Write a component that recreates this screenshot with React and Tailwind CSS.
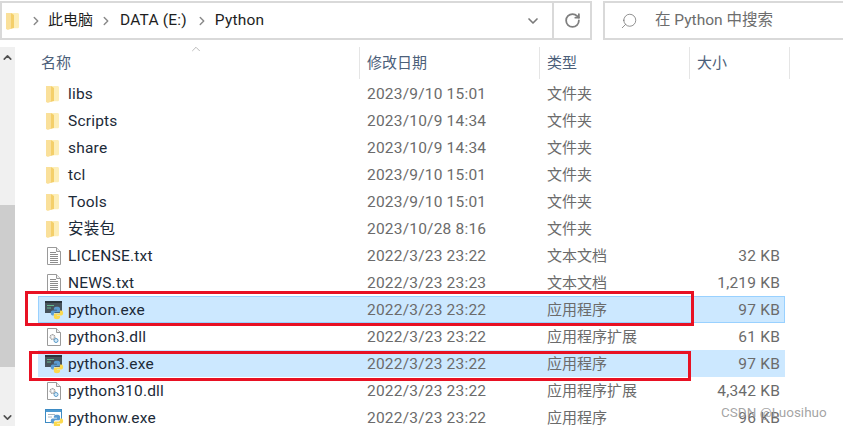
import { ChevronRight, ChevronDown, ChevronUp, RotateCw, Search } from "lucide-react";

const FONT = "font-['Roboto','Noto_Sans_CJK_SC',sans-serif]";

const ROWS = [
  { name: "libs", date: "2023/9/10 15:01", type: "文件夹", size: "", icon: "folder" },
  { name: "Scripts", date: "2023/10/9 14:34", type: "文件夹", size: "", icon: "folder" },
  { name: "share", date: "2023/10/9 14:34", type: "文件夹", size: "", icon: "folder" },
  { name: "tcl", date: "2023/9/10 15:01", type: "文件夹", size: "", icon: "folder" },
  { name: "Tools", date: "2023/9/10 15:01", type: "文件夹", size: "", icon: "folder" },
  { name: "安装包", date: "2023/10/28 8:16", type: "文件夹", size: "", icon: "folder" },
  { name: "LICENSE.txt", date: "2022/3/23 23:22", type: "文本文档", size: "32 KB", icon: "txt" },
  { name: "NEWS.txt", date: "2022/3/23 23:23", type: "文本文档", size: "1,219 KB", icon: "txt" },
  { name: "python.exe", date: "2022/3/23 23:22", type: "应用程序", size: "97 KB", icon: "py", selected: "focus" },
  { name: "python3.dll", date: "2022/3/23 23:22", type: "应用程序扩展", size: "61 KB", icon: "dll" },
  { name: "python3.exe", date: "2022/3/23 23:22", type: "应用程序", size: "97 KB", icon: "py", selected: "plain" },
  { name: "python310.dll", date: "2022/3/23 23:22", type: "应用程序扩展", size: "4,342 KB", icon: "dll" },
  { name: "pythonw.exe", date: "2022/3/23 23:22", type: "应用程序", size: "96 KB", icon: "pyw" },
];

function FolderIcon({ className = "" }) {
  return (
    <svg width="13" height="18" viewBox="0 0 13 18" className={className}>
      <path d="M0 1h5l2 1v14l-5 1.500H1l-1-1z" fill="#fbe39a" />
      <path d="M5 1h6.500c.8 0 1.500.5 1.500 1.500V15c0 .8-.7 1.300-1.500 1.300H7z" fill="#fdeeb8" />
      <path d="M5 1l3 2v13l-6 1.500 3-1.500z" fill="#f4cf6a" />
      <path d="M0 1h5v15.500l-3 1H1l-1-1z" fill="#fae09a" />
    </svg>
  );
}

function PageIcon({ children }) {
  return (
    <svg width="16" height="18" viewBox="0 0 16 18">
      <path d="M1.500.5h9l4 4v13h-13z" fill="#fff" stroke="#9a9a9a" />
      <path d="M10.500.5v4h4" fill="#eee" stroke="#9a9a9a" />
      {children}
    </svg>
  );
}

function TxtIcon() {
  return (
    <PageIcon>
      <path d="M4 5.500h6M4 7.500h8M4 9.500h8M4 11.500h8M4 13.500h8M4 15.500h8" stroke="#8c8c8c" />
    </PageIcon>
  );
}

function DllIcon() {
  return (
    <PageIcon>
      <circle cx="6.500" cy="9" r="2.500" fill="#ddd" stroke="#8a8a8a" strokeDasharray="1.500 .7" />
      <circle cx="6.500" cy="9" r="1" fill="#fff" />
      <circle cx="10" cy="12.500" r="2" fill="#d4e9f7" stroke="#5b9bc9" />
    </PageIcon>
  );
}

// python logo on a 24 unit grid, scaled into the corner of the exe icons
function Snake() {
  const half = "M12 2c-3 0-5 1-5 3v2h5v1H5c-2 0-3 2-3 4s1 4 3 4h2v-2c0-2 1.500-3 3-3h5c1.500 0 2-1 2-2V5c0-2-2-3-5-3z";
  return (
    <g transform="translate(4.500,5.500) scale(.62)">
      <path d={half} fill="#5a9bd2" />
      <path d={half} fill="#fbd94f" transform="rotate(180 12 12)" />
    </g>
  );
}

function PythonIcon() {
  return (
    <svg width="19" height="20" viewBox="0 0 19 20">
      <rect x="0" y="1" width="17" height="12" fill="#46525c" />
      <rect x="0" y="1" width="17" height="2" fill="#2b353d" />
      <path d="M2 5.500h7M2 8h4" stroke="#62b78d" />
      <Snake />
    </svg>
  );
}

function PythonWIcon() {
  return (
    <svg width="19" height="20" viewBox="0 0 19 20">
      <rect x=".5" y="1.500" width="16" height="13" fill="#fff" stroke="#3d8bc4" />
      <rect x="1" y="2" width="15" height="2" fill="#4d9ad2" />
      <path d="M3 6.500h7M3 9h4" stroke="#a9b6c0" />
      <Snake />
    </svg>
  );
}

const ICONS = {
  folder: <FolderIcon className="mr-[3px]" />,
  txt: <TxtIcon />,
  dll: <DllIcon />,
  py: <PythonIcon />,
  pyw: <PythonWIcon />,
};

function Row({ row }) {
  const tone =
    row.selected === "focus"
      ? "bg-[#cce8ff] border border-[#99d1ff]"
      : row.selected === "plain"
        ? "bg-[#cce8ff] border border-[#cce8ff]"
        : "border border-transparent";
  return (
    <div className={`flex h-[27px] w-[747px] items-center text-[15.500px] tracking-[0.2px] ${tone}`}>
      <div className="flex w-[29px] shrink-0 justify-center pl-px">{ICONS[row.icon]}</div>
      <div className="w-[299px] shrink-0 pt-[2px] text-[#1c2a38]">{row.name}</div>
      <div className="w-[180px] shrink-0 pt-[2px] text-[#6b6b6b]">{row.date}</div>
      <div className="w-[143px] shrink-0 pt-px text-[15px] tracking-normal text-[#6b6b6b]">{row.type}</div>
      <div className="w-[90px] shrink-0 pt-[2px] text-right text-[#6b6b6b]">{row.size}</div>
    </div>
  );
}

function HeaderCell({ label, className }) {
  return (
    <div className={`flex h-[32px] items-center border-r border-[#e5e5e5] pl-[7px] ${className}`}>
      {label}
    </div>
  );
}

export default function App() {
  return (
    <div className={`relative h-[426px] w-[843px] overflow-hidden bg-white ${FONT}`}>
      {/* toolbar */}
      <div className="flex h-[47px] items-start pt-px">
        <div className="flex h-[39px] w-[592px] items-center border-2 border-[#d9d9d9] text-[15.500px] tracking-[0.2px] text-[#1e1e1e]">
          <div className="ml-[4px] flex"><FolderIcon /></div>
          <ChevronRight size={14} strokeWidth={2.500} className="ml-[10px] text-[#8a8a8a]" />
          <span className="ml-[5px] text-[15px] tracking-normal">此电脑</span>
          <ChevronRight size={14} strokeWidth={2.500} className="ml-[6px] text-[#8a8a8a]" />
          <span className="ml-[7px]">DATA (E:)</span>
          <ChevronRight size={14} strokeWidth={2.500} className="ml-[8px] text-[#8a8a8a]" />
          <span className="ml-[6px]">Python</span>
          <div className="flex-1" />
          <ChevronDown size={16} strokeWidth={2.500} className="mr-[11px] text-[#7a7a7a]" />
          <div className="flex h-full w-[38px] items-center justify-center border-l-2 border-[#d9d9d9]">
            <RotateCw size={17} strokeWidth={2.500} className="text-[#7f7f7f]" />
          </div>
        </div>
        <div className="ml-[11px] flex h-[39px] flex-1 items-center border-y-2 border-l-2 border-[#d9d9d9] pl-[15px]">
          <Search size={18} strokeWidth={1} className="-scale-x-100 text-[#6f6f6f]" />
          <span className="ml-[17px] text-[15.500px] text-[#6d6d6d]">在 Python 中搜索</span>
        </div>
      </div>

      <div className="flex">
        {/* scrollbar */}
        <div className="flex h-[379px] w-[15px] shrink-0 flex-col bg-[#f0f0f0]">
          <div className="flex h-[17px] items-center justify-center pt-1">
            <ChevronUp size={13} strokeWidth={3} className="text-[#505050]" />
          </div>
          <div className="mt-[141px] h-[162px] bg-[#cdcdcd]" />
          <div className="flex flex-1 items-end justify-center pb-[2px]">
            <ChevronDown size={13} strokeWidth={3} className="text-[#505050]" />
          </div>
        </div>

        <div className="relative flex-1 pl-[23px]">
          {/* sort caret */}
          <ChevronUp size={14} strokeWidth={1} className="absolute left-[174px] top-[-5px] text-[#8a8a8a]" />
          <div className="flex h-[33px] pl-[3px] text-[15px] text-[#4c607a]">
            <div className="flex h-[32px] w-[319px] items-center border-r border-[#e5e5e5]">名称</div>
            <HeaderCell label="修改日期" className="w-[180px]" />
            <HeaderCell label="类型" className="w-[150px]" />
            <HeaderCell label="大小" className="w-[100px]" />
          </div>
          {ROWS.map((row) => (
            <Row key={row.name} row={row} />
          ))}
        </div>
      </div>

      {/* red annotation boxes */}
      <div className="absolute left-[25px] top-[291px] h-[35px] w-[669px] border-[3px] border-[#e81123]" />
      <div className="absolute left-[29px] top-[351px] h-[30px] w-[662px] border-[3px] border-[#e81123]" />

      {/* watermark */}
      <div className="absolute left-[721px] top-[402px] text-[13.500px] text-[#9a9a9a]/90">CSDN @Luosihuo</div>
    </div>
  );
}
